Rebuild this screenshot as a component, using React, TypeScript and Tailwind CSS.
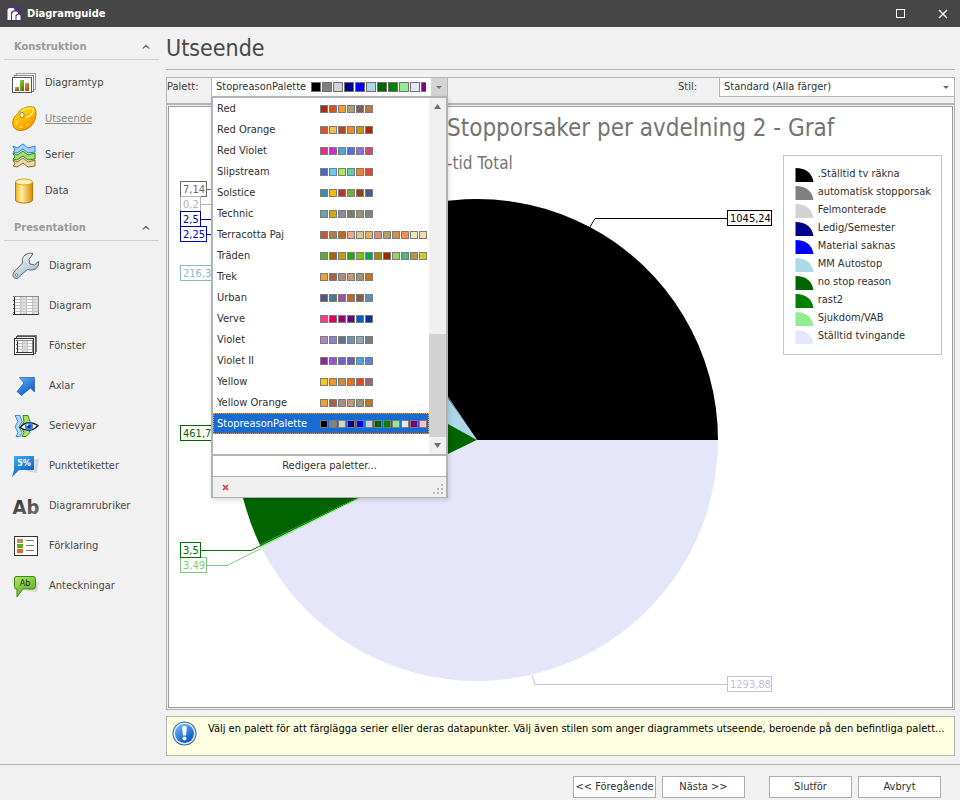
import React, { useState } from "react";

const FONT = "font-['Tahoma','DejaVu_Sans_Condensed','Noto_Sans',sans-serif]";

/* ---------- data ---------- */

const palettes: { name: string; colors: string[] }[] = [
  { name: "Red", colors: ["#a5300f", "#d55816", "#f89c33", "#b19c7d", "#7f5f52", "#b27d49"] },
  { name: "Red Orange", colors: ["#e84c22", "#ffbd47", "#b64926", "#ff8427", "#cc9900", "#b22600"] },
  { name: "Red Violet", colors: ["#e32d91", "#c830cc", "#4ea6dc", "#4775e7", "#8971e1", "#d54773"] },
  { name: "Slipstream", colors: ["#4e67c8", "#5eccf3", "#a7ea52", "#5dceaf", "#ff8021", "#f14124"] },
  { name: "Solstice", colors: ["#3891a7", "#feb80a", "#c32d2e", "#84aa33", "#964305", "#475a8d"] },
  { name: "Technic", colors: ["#6ea0b0", "#ccaf0a", "#8d89a4", "#748560", "#9e9273", "#7e848d"] },
  { name: "Terracotta Paj", colors: ["#c95733", "#a5834b", "#c06914", "#f0a68c", "#dcc983", "#ecb352", "#dd8e74", "#b89e69", "#d48e46", "#ff8e45", "#f2e6b8", "#fbdca0"] },
  { name: "Träden", colors: ["#5faf24", "#ad6500", "#baa20c", "#1caa0c", "#7ac50c", "#00a651", "#9f8b00", "#9d2a00", "#a2cf5b", "#44c07b", "#b9953e", "#d9c42f"] },
  { name: "Trek", colors: ["#f0a22e", "#a5644e", "#b58b80", "#c3986d", "#a19574", "#c17529"] },
  { name: "Urban", colors: ["#53548a", "#438086", "#a04da3", "#c4652d", "#8b5d3d", "#5c92b5"] },
  { name: "Verve", colors: ["#ff388c", "#e40059", "#9c007f", "#68007f", "#005bd3", "#00349e"] },
  { name: "Violet", colors: ["#ad84c6", "#8784c7", "#5d739a", "#6997af", "#84acb6", "#6f8183"] },
  { name: "Violet II", colors: ["#92278f", "#9b57d3", "#755dd9", "#665eb8", "#45a5ed", "#5982db"] },
  { name: "Yellow", colors: ["#ffca08", "#f8931d", "#ce8d3e", "#ec7016", "#e64823", "#9c6a6a"] },
  { name: "Yellow Orange", colors: ["#f0a22e", "#a5644e", "#b58b80", "#c3986d", "#a19574", "#c17529"] },
  { name: "StopreasonPalette", colors: ["#000000", "#808080", "#d3d3d3", "#00008b", "#0000ff", "#add8e6", "#006400", "#008000", "#90ee90", "#e6e6fa", "#800080", "#ffc0cb"] },
];

const slices = [
  { name: ".Ställtid tv räkna", value: 1045.24, color: "#000000" },
  { name: "automatisk stopporsak", value: 7.14, color: "#808080" },
  { name: "Felmonterade", value: 0.2, color: "#d3d3d3" },
  { name: "Ledig/Semester", value: 2.5, color: "#00008b" },
  { name: "Material saknas", value: 2.25, color: "#0000ff" },
  { name: "MM Autostop", value: 216.3, color: "#add8e6" },
  { name: "no stop reason", value: 461.7, color: "#006400" },
  { name: "rast2", value: 3.5, color: "#008000" },
  { name: "Sjukdom/VAB", value: 3.49, color: "#90ee90" },
  { name: "Ställtid tvingande", value: 1293.88, color: "#e6e6fa" },
];

/* callout boxes around the pie, in chart coordinates */
const callouts = [
  { text: "7,14", x: 11, y: 74, w: 27, color: "#696969", line: "38,82 60,82" },
  { text: "0,2", x: 11, y: 89, w: 21, color: "#b4b4b4", line: "32,97 60,97" },
  { text: "2,5", x: 11, y: 104, w: 21, color: "#00008b", line: "32,112 60,112" },
  { text: "2,25", x: 11, y: 119, w: 27, color: "#0000cd", line: "38,127 60,127" },
  { text: "216,3", x: 11, y: 158, w: 39, color: "#8fb8c8", line: "50,166 60,166" },
  { text: "461,7", x: 11, y: 318, w: 39, color: "#006400", line: "50,326 60,326" },
  { text: "3,49", x: 11, y: 450, w: 27, color: "#7ccb7c", line: "38,458 58,458 92,441" },
  { text: "3,5", x: 11, y: 435, w: 21, color: "#007000", line: "32,443 82,443 92,438" },
  { text: "1045,24", x: 558, y: 103, w: 45, color: "#000000", line: "558,111 426,111 420,121" },
  { text: "1293,88", x: 558, y: 569, w: 45, color: "#c0c0dc", line: "558,577 366,577 363,568" },
];

/* ---------- icons ---------- */

function Gradient({ id, from, to }: { id: string; from: string; to: string }) {
  return (
    <linearGradient id={id} x1="0" y1="0" x2="0.6" y2="1">
      <stop offset="0" stopColor={from} />
      <stop offset="1" stopColor={to} />
    </linearGradient>
  );
}

function Icon({ children }: { children: React.ReactNode }) {
  return (
    <svg width="28" height="28" viewBox="0 0 28 28" fill="none" aria-hidden="true" className="shrink-0">
      {children}
    </svg>
  );
}

const ChartTypeIcon = () => (
  <Icon>
    <defs>
      <Gradient id="barA" from="#e0a070" to="#8a4a18" />
      <Gradient id="barB" from="#9ad050" to="#3f8500" />
      <Gradient id="barC" from="#f09050" to="#a84a10" />
    </defs>
    <rect x="4.500" y="4.500" width="19" height="16" fill="#f4f4f4" stroke="#a0a0a0" />
    <rect x="2.500" y="6.500" width="19" height="16" fill="#f8f8f8" stroke="#888" />
    <rect x="0.500" y="8.500" width="19" height="15" fill="#fff" stroke="#555" />
    <rect x="3" y="18" width="4" height="4" fill="url(#barA)" />
    <rect x="8" y="11" width="4" height="11" fill="url(#barB)" />
    <rect x="13" y="14" width="4" height="8" fill="url(#barC)" />
  </Icon>
);

const PaletteIcon = () => (
  <Icon>
    <defs>
      <Gradient id="pal" from="#fff000" to="#f79400" />
    </defs>
    <path
      d="M22.500 2.500C25.500 7 24 16 19 21 14 26 5 27.500 2 22.500-.5 18 1 12 5 9.500 7 8 6.500 6.500 8.500 5 12 2.500 18 .8 22.500 2.500Z"
      fill="url(#pal)"
      stroke="#c98000"
    />
    <path d="M9.500 5.500C13 3.500 18 2.500 21.500 3.500 22 8 18 12 14 12.500" stroke="#fff78a" strokeWidth="1.200" />
    <ellipse cx="10" cy="10" rx="2.200" ry="2.700" fill="#eee" stroke="#b98a20" />
    <ellipse cx="4.500" cy="18" rx="1.600" ry="2" fill="#ffd840" />
    <ellipse cx="9" cy="22" rx="1.800" ry="1.300" fill="#ffcc30" />
    <ellipse cx="15.500" cy="20" rx="1.800" ry="1.400" fill="#ffb818" />
  </Icon>
);

function Ribbon({ y, fill, stroke }: { y: number; fill: string; stroke: string }) {
  const d = `M1 ${y + 2} 5 ${y + 4} 11 ${y} 16 ${y + 4} 23 ${y + 2}V${y + 8}L16 ${y + 9} 11 ${y + 5} 5 ${y + 9} 1 ${y + 8} 3 ${y + 6}Z`;
  return <path d={d} fill={fill} stroke={stroke} strokeLinejoin="round" />;
}

const SeriesIcon = () => (
  <Icon>
    <Ribbon y={17} fill="#ecd8a8" stroke="#8f6d2c" />
    <Ribbon y={10} fill="#9fdd70" stroke="#2f8a12" />
    <Ribbon y={3} fill="#a5d2fc" stroke="#2a80d6" />
  </Icon>
);

const DataIcon = () => (
  <Icon>
    <defs>
      <linearGradient id="cyl" x1="0" x2="1">
        <stop offset="0" stopColor="#f0a818" />
        <stop offset=".35" stopColor="#fff0a0" />
        <stop offset="1" stopColor="#d88c00" />
      </linearGradient>
    </defs>
    <path d="M3.500 5v18c0 4 17 4 17 0V5Z" fill="url(#cyl)" stroke="#b87800" />
    <ellipse cx="12" cy="5" rx="8.500" ry="3" fill="#fff3b8" stroke="#dba020" />
  </Icon>
);

const WrenchIcon = () => (
  <Icon>
    <defs>
      <Gradient id="steel" from="#ffffff" to="#a9bac6" />
    </defs>
    <path
      d="M21 1.500C15 0 9 4 10.500 11L2 20C0 23 1 26.500 4.500 26.500 7 26.500 8 24 10 22L15.500 17.500C22 19.500 27.500 16 26.500 9.500L22.500 13 18 12 17 7.500Z"
      fill="url(#steel)"
      stroke="#59656e"
      strokeLinejoin="round"
    />
    <circle cx="4.500" cy="23" r="1.300" fill="#fff" stroke="#7a868e" />
  </Icon>
);

function Grid({ x, y, w, h, rows, cols }: { x: number; y: number; w: number; h: number; rows: number; cols: number }) {
  const colW = w / cols;
  const rowH = h / rows;
  return (
    <g shapeRendering="crispEdges">
      <rect x={x} y={y} width={w} height={h} fill="#fbfbfb" />
      {Array.from({ length: cols }, (_, i) =>
        i % 2 ? <rect key={i} x={x + i * colW} y={y} width={colW} height={h} fill="#dedede" /> : null,
      )}
      {Array.from({ length: rows }, (_, i) => (
        <path key={i} d={`M${x} ${y + i * rowH + 0.5}h${w}`} stroke="#c6c6c6" />
      ))}
      {Array.from({ length: cols + 1 }, (_, i) => (
        <path key={i} d={`M${x + i * colW + 0.5} ${y}v${h}`} stroke="#c0c0c0" />
      ))}
      <path d={`M${x + 0.5} ${y}v${h + 1}M${x - 1} ${y + h + 0.5}h${w + 2}`} stroke="#333" />
      <path d={`M${x} ${y + 0.5}h${w}v${h}`} stroke="#8a8a8a" />
      <path d={`M${x - 0.5} ${y}v${h}`} stroke="#666" strokeDasharray="1 3" />
    </g>
  );
}

const DiagramIcon = () => (
  <Icon>
    <Grid x={2} y={4} w={24} h={18} rows={6} cols={4} />
  </Icon>
);

const PaneIcon = () => (
  <Icon>
    <rect x="5.500" y="3.500" width="19" height="16" fill="#eee" stroke="#777" />
    <rect x="4.500" y="4.500" width="19" height="17" fill="#eee" stroke="#555" />
    <rect x="2.500" y="6.500" width="19" height="16" fill="#fff" stroke="#333" />
    <Grid x={5} y={8} w={15} h={12} rows={4} cols={3} />
  </Icon>
);

const AxesIcon = () => (
  <Icon>
    <defs>
      <Gradient id="axis" from="#68b4ff" to="#0a5cc0" />
    </defs>
    <path d="M7.500 5.500H22.500V20L18.500 16 9.500 23.500 5 19.500 12 11Z" fill="url(#axis)" stroke="#1a5cae" strokeWidth=".7" />
  </Icon>
);

const ViewsIcon = () => (
  <Icon>
    <path d="M3 3.500h5l2 6-3 5 3 6-2 4H4l2-4-3-6 3-5Z" fill="#b3dbff" stroke="#3390dd" />
    <path d="M11 3.500h5l2 6-3 5 3 6-4 4h-4l2-4-3-6 3-5Z" fill="#a8df67" stroke="#2f8f14" />
    <path d="M8 15.500c5-6 12-6 18-2-5 6-12 6-18 2Z" fill="#fff" stroke="#222" strokeWidth="1.500" />
    <circle cx="17" cy="14.500" r="4" fill="#2f87e4" />
    <circle cx="17" cy="14.500" r="1.800" fill="#0b3a80" />
    <circle cx="15.500" cy="13" r="1" fill="#fff" />
  </Icon>
);

const PointLabelsIcon = () => (
  <Icon>
    <defs>
      <Gradient id="flag" from="#3fb2f5" to="#0460c0" />
    </defs>
    <path d="M22 7h5l-2 14-11-2Z" fill="#d6d6d6" />
    <path d="M2 4H22V18H7L0 25 2 18Z" fill="url(#flag)" />
    <text x="12" y="14" fill="#fff" fontSize="9" fontWeight="700" textAnchor="middle">5%</text>
  </Icon>
);

const TitlesIcon = () => (
  <Icon>
    <defs>
      <Gradient id="ink" from="#202020" to="#707070" />
    </defs>
    <text x="14" y="22" fill="url(#ink)" fontSize="20" fontWeight="700" textAnchor="middle">Ab</text>
  </Icon>
);

const LegendIcon = () => (
  <Icon>
    <rect x="2.500" y="4.500" width="23" height="19" fill="#fff" stroke="#333" />
    <rect x="5" y="7" width="6" height="4" fill="#bd8a58" />
    <rect x="5" y="12" width="6" height="4" fill="#62a81c" />
    <rect x="5" y="17" width="6" height="4" fill="#e06a24" />
    <path d="M14 8.500h8M14 13.500h8M14 18.500h8" stroke="#777" />
  </Icon>
);

const AnnotationsIcon = () => (
  <Icon>
    <defs>
      <Gradient id="bubble" from="#b2e66a" to="#5cae1e" />
    </defs>
    <path d="M23 9l4 2-2 9-10-1Z" fill="#d6d6d6" />
    <path d="M4 4.500H21q2.500 0 2.500 2v8q0 2.500-2.500 2.500H11L5 25V17H4q-1.500 0-1.500-2.500V6.500q0-2 1.500-2Z" fill="url(#bubble)" stroke="#3f8a14" />
    <text x="13" y="14" fill="#203010" fontSize="9" textAnchor="middle">Ab</text>
  </Icon>
);

const InfoIcon = () => (
  <svg width="26" height="26" viewBox="0 0 26 26" aria-hidden="true" className="shrink-0">
    <defs>
      <Gradient id="info" from="#7dbcff" to="#0a55c4" />
    </defs>
    <circle cx="12.500" cy="12.500" r="12" fill="#2a62ae" />
    <circle cx="12.500" cy="12.500" r="11" fill="#dceaf8" />
    <circle cx="12.500" cy="12.500" r="9.500" fill="url(#info)" />
    <path d="M10.200 7a2.300 2.300 0 0 1 4.600 0l-.8 7.500h-3Z" fill="#fff" />
    <circle cx="12.500" cy="17.500" r="2" fill="#fff" />
  </svg>
);

/* ---------- sidebar ---------- */

type Item = { label: string; icon: React.FC; active?: boolean };

const construction: Item[] = [
  { label: "Diagramtyp", icon: ChartTypeIcon },
  { label: "Utseende", icon: PaletteIcon, active: true },
  { label: "Serier", icon: SeriesIcon },
  { label: "Data", icon: DataIcon },
];

const presentation: Item[] = [
  { label: "Diagram", icon: WrenchIcon },
  { label: "Diagram", icon: DiagramIcon },
  { label: "Fönster", icon: PaneIcon },
  { label: "Axlar", icon: AxesIcon },
  { label: "Serievyar", icon: ViewsIcon },
  { label: "Punktetiketter", icon: PointLabelsIcon },
  { label: "Diagramrubriker", icon: TitlesIcon },
  { label: "Förklaring", icon: LegendIcon },
  { label: "Anteckningar", icon: AnnotationsIcon },
];

function Section({ title, items, large }: { title: string; items: Item[]; large?: boolean }) {
  return (
    <section>
      <h2 className="ml-1">
        <button className="flex h-8 w-full items-center justify-between border-b border-[#cfcfcf] pt-1.5 pr-[9px] pl-2.5 text-[11px] font-bold text-[#9a9a9a]">
          {title}
          <svg width="8" height="5" viewBox="0 0 8 5" aria-hidden="true">
            <path d="M0 4.500 4 .5l4 4H6.500L4 2.800 1.500 4.500Z" fill="#666" />
          </svg>
        </button>
      </h2>
      <ul className="pt-[5px]">
        {items.map(({ label, icon: Glyph, active }, i) => (
          <li key={i}>
            <a
              href="#"
              className={`flex items-center pl-3 text-[11px] ${large ? "h-10 gap-[9px]" : "h-9 gap-[5px]"} ${
                active ? "text-[#8a8a8a] underline" : "text-[#484848]"
              }`}
            >
              <Glyph />
              {label}
            </a>
          </li>
        ))}
      </ul>
    </section>
  );
}

/* ---------- chart ---------- */

function Pie() {
  const cx = 308;
  const cy = 333;
  const r = 241;
  const total = slices.reduce((sum, s) => sum + s.value, 0);
  let angle = 0;
  return (
    <g>
      {slices.map((s) => {
        const start = angle;
        angle += (s.value / total) * Math.PI * 2;
        const point = (a: number) => `${cx + r * Math.cos(a)} ${cy - r * Math.sin(a)}`;
        const big = angle - start > Math.PI ? 1 : 0;
        return <path key={s.name} d={`M${cx} ${cy}L${point(start)}A${r} ${r} 0 ${big} 0 ${point(angle)}Z`} fill={s.color} />;
      })}
    </g>
  );
}

function Chart() {
  return (
    <div className="relative">
      <svg viewBox="0 0 783 600" className="block w-full" role="img" aria-label="Stopporsaker per avdelning 2 - Graf">
        <text x="278" y="29" fontSize="24" fill="#747474">Stopporsaker per avdelning 2 - Graf</text>
        <text x="278" y="62" fontSize="17" fill="#747474">-tid Total</text>
        <Pie />
        {callouts.map((c) => (
          <g key={c.text}>
            <polyline points={c.line} fill="none" stroke={c.color} transform="translate(0 .5)" />
            <rect x={c.x + 0.5} y={c.y + 0.5} width={c.w - 1} height="15" fill="#fff" stroke={c.color} />
            <text x={c.x + 3} y={c.y + 12} fontSize="11" fill={c.color}>{c.text}</text>
          </g>
        ))}
      </svg>
      <ul className="absolute top-12 right-[10px] border border-[#c4c4c4] bg-white py-[9px] pr-2.5 pl-[11px] text-[11px] text-[#303030]">
        {slices.map((s) => (
          <li key={s.name} className="flex h-[18px] items-center gap-1">
            <svg width="19" height="14" viewBox="0 0 19 14" aria-hidden="true" className="mt-px">
              <path d="M.5 0C11 0 17 5 18.500 14H.5Z" fill={s.color} />
            </svg>
            {s.name}
          </li>
        ))}
      </ul>
    </div>
  );
}

/* ---------- palette picker ---------- */

function PalettePicker() {
  const [selected, setSelected] = useState("StopreasonPalette");
  const current = palettes.find((p) => p.name === selected) ?? palettes[0];
  return (
    <div className="relative w-[237px] self-stretch">
      <button
        id="palette"
        aria-haspopup="listbox"
        aria-expanded="true"
        className="flex h-[18px] w-full items-center border-x border-[#b4b4b4] bg-white pl-1 text-[11px] text-[#303030]"
      >
        <span className="w-[95px] shrink-0 text-left whitespace-nowrap">{current.name}</span>
        <span className="flex w-[115px] gap-px overflow-hidden">
          {current.colors.map((c, i) => (
            <span key={i} className="size-2.5 shrink-0 border border-[#707070]" style={{ backgroundColor: c }} />
          ))}
        </span>
        <span className="ml-auto flex h-full w-4 items-center justify-center bg-[#d4d4d4]">
          <svg width="6" height="3" viewBox="0 0 6 3" aria-hidden="true">
            <path d="M0 0h6L3 3Z" fill="#777" />
          </svg>
        </span>
      </button>

      <div className="absolute top-[18px] left-0 z-10 w-full border-x-2 border-t-2 border-b border-[#b2b2b2] bg-[#f0f0f0] shadow-[1px_2px_5px_rgba(0,0,0,0.15)]">
        <div className="flex border-b-2 border-[#b2b2b2] bg-white">
          <ul role="listbox" aria-labelledby="palette-label" className="flex-1 pb-5">
            {palettes.map((p) => {
              const active = p.name === selected;
              return (
                <li
                  key={p.name}
                  role="option"
                  aria-selected={active}
                  onClick={() => setSelected(p.name)}
                  className={`flex h-[21px] items-center border border-dotted pl-[3px] text-[11px] ${
                    active ? "border-[#e5a04a] bg-[#186bd0] text-white" : "border-transparent text-[#303030]"
                  }`}
                >
                  <span className="w-[103px] shrink-0 whitespace-nowrap">{p.name}</span>
                  <span className="flex gap-px">
                    {p.colors.map((c, i) => (
                      <span key={i} className="size-2 border border-[#7c7c7c]" style={{ backgroundColor: c }} />
                    ))}
                  </span>
                </li>
              );
            })}
          </ul>
          <div className="flex w-[17px] flex-col items-center bg-[#f0f0f0]">
            <svg width="7" height="5" viewBox="0 0 7 5" aria-hidden="true" className="mt-1.5">
              <path d="M0 5h7L3.500 0Z" fill="#707070" />
            </svg>
            <div className="mt-auto h-[103px] w-full bg-[#d2d2d2]" />
            <svg width="7" height="5" viewBox="0 0 7 5" aria-hidden="true" className="my-1.5">
              <path d="M0 0h7L3.500 5Z" fill="#707070" />
            </svg>
          </div>
        </div>
        <button className="block h-[21px] w-full border-b border-[#b2b2b2] bg-white text-center text-[11px] text-[#303030]">
          Redigera paletter...
        </button>
        <div className="flex h-5 items-center justify-between pr-0.5 pl-2">
          <button aria-label="Stäng" className="flex size-2 items-center justify-center">
            <svg width="7" height="7" viewBox="0 0 7 7" aria-hidden="true">
              <path d="M1 1l5 5M6 1 1 6" stroke="#dc3545" strokeWidth="1.700" />
            </svg>
          </button>
          <svg width="11" height="11" viewBox="0 0 11 11" fill="#b8b8b8" aria-hidden="true" className="mt-1">
            <path d="M8 0h2v2h-2zM4 4h2v2h-2zM8 4h2v2h-2zM0 8h2v2h-2zM4 8h2v2h-2zM8 8h2v2h-2z" />
          </svg>
        </div>
      </div>
    </div>
  );
}

/* ---------- page ---------- */

function FooterButton({ children }: { children: React.ReactNode }) {
  return (
    <button className="h-[22px] w-[83px] border border-[#adadad] bg-white text-center text-[11px] whitespace-nowrap text-[#303030]">
      {children}
    </button>
  );
}

export default function App() {
  return (
    <div className={`flex min-h-screen flex-col bg-[#f1f1f1] leading-4 ${FONT}`}>
      <header className="flex h-[27px] items-center bg-[#464646] pr-3 pl-1.5 text-white">
        <svg width="16" height="16" viewBox="0 0 16 16" fill="none" aria-hidden="true">
          <rect width="16" height="16" fill="#4b3b63" />
          <path
            d="M1.500 14V4.500Q1.500 2 4 2h2.500Q8.500 2 8.500 4L5 6v8ZM6 14V8.500Q6 6 8.500 5.500h1.500q2 0 2 2L9.500 9v5ZM10.500 14v-3q0-2.500 2.500-2.500 1.500 0 1.500 2V14Z"
            fill="#fff"
          />
        </svg>
        <h1 className="ml-[5px] text-[11px] font-bold">Diagramguide</h1>
        <div className="ml-auto flex items-center gap-[33px]">
          <button aria-label="Maximera" className="size-[9px] border border-white" />
          <button aria-label="Stäng fönstret">
            <svg width="10" height="10" viewBox="0 0 10 10" aria-hidden="true">
              <path d="M1 1l8 8M9 1 1 9" stroke="#fff" strokeWidth="1.400" />
            </svg>
          </button>
        </div>
      </header>

      <div className="flex flex-1">
        <nav className="w-[159px] shrink-0 pt-px">
          <Section title="Konstruktion" items={construction} />
          <Section title="Presentation" items={presentation} large />
        </nav>

        <main className="ml-[7px] flex min-w-0 flex-1 flex-col pr-[5px]">
          <h2 className="flex h-[43px] items-center border-b border-[#b4b4b4] text-[23px] text-[#484848]">Utseende</h2>

          <div className="mt-[7px] border border-[#b4b4b4]">
            <div className="flex h-[25px] text-[11px] text-[#404040]">
              <label id="palette-label" htmlFor="palette" className="w-11 shrink-0 pt-px">Palett:</label>
              <PalettePicker />
              <label htmlFor="style" className="ml-auto w-[41px] pt-px">Stil:</label>
              <div className="relative h-[19px] w-[235px] border-b border-l border-[#b4b4b4]">
                <select id="style" className="h-full w-full appearance-none bg-white pl-1 text-[#303030]">
                  <option>Standard (Alla färger)</option>
                </select>
                <svg width="6" height="3" viewBox="0 0 6 3" aria-hidden="true" className="pointer-events-none absolute top-2 right-[5px]">
                  <path d="M0 0h6L3 3Z" fill="#666" />
                </svg>
              </div>
            </div>
            <div className="border-t-2 border-[#b4b4b4] p-px">
              <div className="border border-[#9c9c9c] bg-white">
                <Chart />
              </div>
            </div>
          </div>

          <div className="mt-1.5 flex h-10 items-start border border-[#b4b4b4] bg-[#ffffe1] pt-1 pr-1.5 pl-[5px]">
            <InfoIcon />
            <p className="ml-2.5 min-w-0 flex-1 truncate text-[11px] text-black">
              Välj en palett för att färglägga serier eller deras datapunkter. Välj även stilen som anger diagrammets utseende, beroende på den befintliga palett...
            </p>
          </div>
        </main>
      </div>

      <footer className="mt-2 flex justify-end gap-6 border-t border-[#b4b4b4] pt-[11px] pr-[19px] pb-0.5">
        <div className="flex gap-1.5">
          <FooterButton>&lt;&lt; Föregående</FooterButton>
          <FooterButton>Nästa &gt;&gt;</FooterButton>
        </div>
        <div className="flex gap-1.5">
          <FooterButton>Slutför</FooterButton>
          <FooterButton>Avbryt</FooterButton>
        </div>
      </footer>
    </div>
  );
}
